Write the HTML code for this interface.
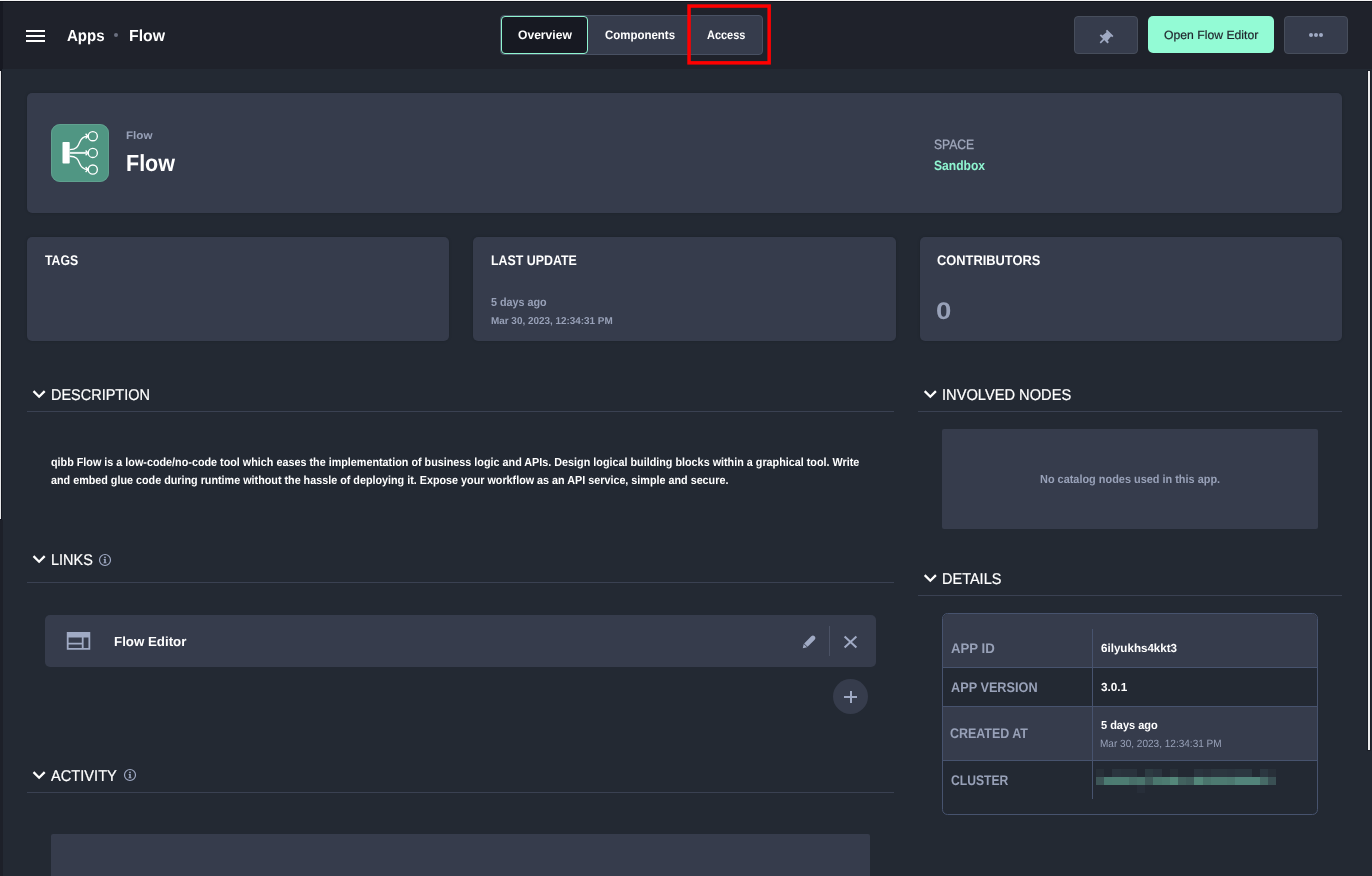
<!DOCTYPE html>
<html lang="en"><head><meta charset="utf-8"><title>Flow - Apps</title>
<style>
html,body{margin:0;padding:0}
body{width:1372px;height:876px;overflow:hidden;background:#232933;position:relative;font-family:"Liberation Sans", sans-serif;}
.a{position:absolute;display:block}
.t{position:absolute;white-space:nowrap;line-height:20px;height:20px;transform-origin:0 0;text-rendering:geometricPrecision;}
.card{position:absolute;background:#363c4c;border-radius:5px;box-shadow:0 0 3px rgba(0,0,0,.18)}
.hr{position:absolute;height:1px;background:#3a4152}
.btn{position:absolute;box-sizing:border-box;background:#363c4c;border:1px solid #474e5c;border-radius:4px}
</style></head><body>
<!-- header -->
<div class="a" style="left:0;top:0;width:1372px;height:69px;background:#1f222b"></div>
<div class="a" style="left:0;top:0;width:1372px;height:1px;background:#f4f4f4"></div>
<div class="a" style="left:0;top:1px;width:1372px;height:1px;background:#10121a"></div>
<div class="a" style="left:0;top:2px;width:3px;height:67px;background:#171922"></div>
<div class="a" style="left:0;top:69px;width:2px;height:451px;background:#141720"></div>
<div class="a" style="left:0;top:71px;width:1px;height:448px;background:#e8e8ea"></div>
<div class="a" style="left:0;top:520px;width:3px;height:356px;background:#1d2029"></div>
<div class="a" style="left:1367px;top:70px;width:4px;height:681px;background:#1b1f28"></div>
<div class="a" style="left:1368px;top:71px;width:2px;height:679px;background:#ececee"></div>
<!-- hamburger -->
<div class="a" style="left:26px;top:30px;width:19px;height:2px;background:#fff"></div>
<div class="a" style="left:26px;top:35px;width:19px;height:2px;background:#fff"></div>
<div class="a" style="left:26px;top:40px;width:19px;height:2px;background:#fff"></div>
<div class="a" style="left:113.7px;top:32.8px;width:4.4px;height:4.4px;border-radius:50%;background:#6b7080"></div>
<!-- tabs -->
<div class="a" style="left:500px;top:15px;width:263px;height:40px;box-sizing:border-box;background:#363c4c;border:1px solid #495163;border-radius:4px"></div>
<div class="a" style="left:501px;top:16px;width:87px;height:38px;box-sizing:border-box;background:#171922;border:1px solid #8ff5d0;border-radius:4px"></div>
<svg class="a" style="left:680px;top:0" width="100" height="70"><rect x="9.05" y="6.05" width="80.1" height="56.8" fill="none" stroke="#ff0000" stroke-width="3.5"/></svg>
<!-- right buttons -->
<div class="btn" style="left:1074px;top:16px;width:64px;height:38px"></div>
<svg class="a" style="left:1094px;top:24px" width="26" height="26" viewBox="-13 -13 26 26"><g transform="translate(-0.9,0.0) rotate(45)" fill="#a0aac4"><rect x="-4.5" y="-5.9" width="9" height="1.9"/><path d="M-3 -4.4 H3 L3.6 2 H-3.6 Z"/><rect x="-5.6" y="1.6" width="11.2" height="1.9"/><rect x="-0.8" y="3" width="1.6" height="5.3"/></g></svg>
<div class="a" style="left:1148px;top:16px;width:126px;height:37px;background:#93fbd5;border-radius:5px"></div>
<div class="btn" style="left:1284px;top:16px;width:64px;height:38px"></div>
<div class="a" style="left:1309px;top:33px;width:4px;height:4px;border-radius:50%;background:#a0aac4"></div>
<div class="a" style="left:1314px;top:33px;width:4px;height:4px;border-radius:50%;background:#a0aac4"></div>
<div class="a" style="left:1319px;top:33px;width:4px;height:4px;border-radius:50%;background:#a0aac4"></div>
<!-- hero card -->
<div class="card" style="left:27px;top:93px;width:1315px;height:120px"></div>
<svg class="a" style="left:51px;top:124px" width="58" height="58" viewBox="0 0 58 58">
<rect x="0" y="0" width="58" height="58" rx="9" fill="#509683"/>
<rect x="0.5" y="0.5" width="57" height="57" rx="8.5" fill="none" stroke="#6aa997" stroke-opacity="0.6"/>
<rect x="11.5" y="18" width="7.2" height="21.6" rx="0.8" fill="#fff"/>
<g fill="none" stroke="#fff" stroke-width="1.35">
<circle cx="41.8" cy="12.2" r="4.55"/><circle cx="41.8" cy="28.9" r="4.55"/><circle cx="41.8" cy="45.5" r="4.55"/>
<path d="M18.7 25.6 C25.5 25.6 27 22.5 28.5 18.5 C30 14.5 32 12.2 36.8 12.2"/>
<path d="M18.7 32.2 C25.5 32.2 27 35.3 28.5 39.3 C30 43.3 32 45.5 36.8 45.5"/>
<path d="M34.6 9.8 L37 12.2 L34.6 14.6 M34.6 26.5 L37 28.9 L34.6 31.3 M34.6 43.1 L37 45.5 L34.6 47.9"/>
</g>
<path d="M18.7 28.9 H36.5" stroke="#e6f1ee" stroke-width="2" fill="none"/>
</svg>
<!-- stat cards -->
<div class="card" style="left:27px;top:237px;width:422px;height:104px"></div>
<div class="card" style="left:473px;top:237px;width:423px;height:104px"></div>
<div class="card" style="left:920px;top:237px;width:422px;height:104px"></div>
<!-- section headers -->
<svg class="a" style="left:0;top:0" width="1372" height="876"><path d="M33.51 391.10 L39.11 396.70 L44.71 391.10" fill="none" stroke="#fff" stroke-width="2.3"/></svg><svg class="a" style="left:0;top:0" width="1372" height="876"><path d="M924.71 391.10 L930.31 396.70 L935.91 391.10" fill="none" stroke="#fff" stroke-width="2.3"/></svg><svg class="a" style="left:0;top:0" width="1372" height="876"><path d="M33.51 556.10 L39.11 561.70 L44.71 556.10" fill="none" stroke="#fff" stroke-width="2.3"/></svg><svg class="a" style="left:0;top:0" width="1372" height="876"><path d="M924.71 575.10 L930.31 580.70 L935.91 575.10" fill="none" stroke="#fff" stroke-width="2.3"/></svg><svg class="a" style="left:0;top:0" width="1372" height="876"><path d="M33.51 772.10 L39.11 777.70 L44.71 772.10" fill="none" stroke="#fff" stroke-width="2.3"/></svg>
<div class="hr" style="left:27px;top:411px;width:867px"></div>
<div class="hr" style="left:918px;top:411px;width:424px"></div>
<div class="hr" style="left:27px;top:582px;width:867px"></div>
<div class="hr" style="left:918px;top:595px;width:424px"></div>
<div class="hr" style="left:27px;top:792px;width:867px"></div>
<svg class="a" style="left:98.1px;top:553px" width="14" height="14" viewBox="-7 -7 14 14"><circle r="5.5" fill="none" stroke="#a0aac4" stroke-width="1.2"/><circle cx="0" cy="-2.6" r="0.9" fill="#a0aac4"/><path d="M-1.3 -1 H0.8 V2.4 H1.6 V3.3 H-1.6 V2.4 H-0.8 V-0.1 H-1.3 Z" fill="#a0aac4"/></svg><svg class="a" style="left:123px;top:768.3px" width="14" height="14" viewBox="-7 -7 14 14"><circle r="5.5" fill="none" stroke="#a0aac4" stroke-width="1.2"/><circle cx="0" cy="-2.6" r="0.9" fill="#a0aac4"/><path d="M-1.3 -1 H0.8 V2.4 H1.6 V3.3 H-1.6 V2.4 H-0.8 V-0.1 H-1.3 Z" fill="#a0aac4"/></svg>
<!-- involved nodes -->
<div class="card" style="left:942px;top:429px;width:376px;height:100px;border-radius:2px;box-shadow:none"></div>
<!-- links -->
<div class="card" style="left:45px;top:615px;width:831px;height:52px;box-shadow:none"></div>
<svg class="a" style="left:66px;top:631px" width="26" height="20" viewBox="0 0 26 20"><path fill-rule="evenodd" fill="#a0aac4" d="M0.8 0.9 H24.25 V18.8 H0.8 Z M2.6 6.4 V11.8 H15.8 V6.4 Z M2.6 13.5 V17 H15.8 V13.5 Z M17.6 6.4 V17 H22.45 V6.4 Z"/></svg>
<svg class="a" style="left:801px;top:634px" width="16" height="16" viewBox="0 0 16 16"><g transform="translate(8,8) rotate(45)" fill="#a0aac4"><path d="M-2.4 -5.6 a2.4 2.4 0 0 1 4.8 0 V4.4 H-2.4 Z"/><path d="M-2.4 5.1 H2.4 L0 8.8 Z"/></g></svg>
<div class="a" style="left:829px;top:626px;width:1px;height:30px;background:#4b5265"></div>
<svg class="a" style="left:843px;top:635px" width="15" height="14" viewBox="0 0 15 14"><path d="M1.6 1.4 L13.4 12.6 M13.4 1.4 L1.6 12.6" stroke="#a0aac4" stroke-width="2" fill="none"/></svg>
<div class="a" style="left:833px;top:679px;width:35px;height:35px;border-radius:50%;background:#363c4c"></div>
<div class="a" style="left:844.3px;top:695.9px;width:12.6px;height:2px;background:#a0aac4"></div>
<div class="a" style="left:849.6px;top:690.6px;width:2px;height:12.6px;background:#a0aac4"></div>
<!-- activity -->
<div class="card" style="left:51px;top:834px;width:819px;height:60px;border-radius:2px 2px 0 0;box-shadow:none"></div>
<!-- details table -->
<div class="a" style="left:942px;top:613px;width:376px;height:202px;box-sizing:border-box;border:1px solid #47536e;border-radius:5.5px;overflow:hidden;background:#232933">
<div class="a" style="left:0;top:0;width:374px;height:53px;background:#363c4c"></div>
<div class="a" style="left:0;top:93px;width:374px;height:53px;background:#363c4c"></div>
<div class="a" style="left:0;top:53px;width:374px;height:1px;background:#47536e"></div>
<div class="a" style="left:0;top:92px;width:374px;height:1px;background:#47536e"></div>
<div class="a" style="left:0;top:146px;width:374px;height:1px;background:#47536e"></div>
<div class="a" style="left:149px;top:15px;width:1px;height:170px;background:#47536e"></div>
</div>
<svg class="a" style="left:1095.8px;top:768.8px" width="181" height="25" shape-rendering="crispEdges"><rect x="0.0" y="8" width="8.25" height="8.2" fill="#3d5557"/><rect x="8.2" y="8" width="8.25" height="8.2" fill="#4c7b72"/><rect x="16.4" y="8" width="8.25" height="8.2" fill="#4d7c72"/><rect x="24.6" y="8" width="8.25" height="8.2" fill="#4d7c72"/><rect x="32.8" y="8" width="8.25" height="8.2" fill="#486f69"/><rect x="41.0" y="8" width="8.25" height="8.2" fill="#4a746c"/><rect x="49.2" y="8" width="8.25" height="8.2" fill="#3f5a5a"/><rect x="57.4" y="8" width="8.25" height="8.2" fill="#4b776e"/><rect x="65.6" y="8" width="8.25" height="8.2" fill="#4d7b71"/><rect x="73.8" y="8" width="8.25" height="8.2" fill="#54877a"/><rect x="82.0" y="8" width="8.25" height="8.2" fill="#42625f"/><rect x="90.2" y="8" width="8.25" height="8.2" fill="#3f5c5b"/><rect x="98.4" y="8" width="8.25" height="8.2" fill="#54877a"/><rect x="106.6" y="8" width="8.25" height="8.2" fill="#4a746c"/><rect x="114.8" y="8" width="8.25" height="8.2" fill="#4d7a71"/><rect x="123.0" y="8" width="8.25" height="8.2" fill="#4d7a71"/><rect x="131.2" y="8" width="8.25" height="8.2" fill="#4c776f"/><rect x="139.4" y="8" width="8.25" height="8.2" fill="#52837a"/><rect x="147.6" y="8" width="8.25" height="8.2" fill="#52837a"/><rect x="155.8" y="8" width="8.25" height="8.2" fill="#52837a"/><rect x="164.0" y="8" width="8.25" height="8.2" fill="#476b67"/><rect x="172.2" y="8" width="8.25" height="8.2" fill="#3a5054"/><rect x="0.0" y="0" width="8.25" height="8" fill="#283039"/><rect x="16.4" y="0" width="8.25" height="8" fill="#2b353f"/><rect x="24.6" y="0" width="8.25" height="8" fill="#2a333d"/><rect x="32.8" y="0" width="8.25" height="8" fill="#2a333d"/><rect x="49.2" y="0" width="8.25" height="8" fill="#2d3b42"/><rect x="57.4" y="0" width="8.25" height="8" fill="#2b353f"/><rect x="73.8" y="0" width="8.25" height="8" fill="#283039"/><rect x="98.4" y="0" width="8.25" height="8" fill="#2b353f"/><rect x="106.6" y="0" width="8.25" height="8" fill="#2a323c"/><rect x="114.8" y="0" width="8.25" height="8" fill="#2c3740"/><rect x="123.0" y="0" width="8.25" height="8" fill="#2c3740"/><rect x="131.2" y="0" width="8.25" height="8" fill="#2b353f"/><rect x="139.4" y="0" width="8.25" height="8" fill="#2c3841"/><rect x="147.6" y="0" width="8.25" height="8" fill="#2c3841"/><rect x="164.0" y="0" width="8.25" height="8" fill="#2c3841"/><rect x="172.2" y="0" width="8.25" height="8" fill="#283039"/><rect x="41.0" y="16.2" width="8.2" height="8" fill="#272e39"/></svg>
<div class="a" style="left:0;top:0;width:1372px;height:876px;will-change:transform"><span class="t" id="t-apps" style="left:67.31px;top:27.00px;font-size:16px;font-weight:700;color:#fff;transform:scaleX(0.9399);">Apps</span><span class="t" id="t-bflow" style="left:129.15px;top:27.00px;font-size:16px;font-weight:700;color:#fff;transform:scaleX(0.9881);">Flow</span><span class="t" id="t-ov" style="left:517.82px;top:25.00px;font-size:12.25px;font-weight:700;color:#fff;transform:scaleX(0.9878);">Overview</span><span class="t" id="t-comp" style="left:604.54px;top:25.00px;font-size:12.25px;font-weight:700;color:#fff;transform:scaleX(0.9360);">Components</span><span class="t" id="t-acc" style="left:707.01px;top:25.00px;font-size:12.25px;font-weight:700;color:#fff;transform:scaleX(0.8952);">Access</span><span class="t" id="t-open" style="left:1163.68px;top:25.00px;font-size:12px;font-weight:400;color:#1f222b;transform:scaleX(1.0166);-webkit-text-stroke:0.2px #1f222b;">Open Flow Editor</span><span class="t" id="t-sflow" style="left:125.59px;top:126.00px;font-size:11px;font-weight:700;color:#98a1b8;transform:scaleX(1.0578);">Flow</span><span class="t" id="t-hflow" style="left:125.92px;top:153.00px;font-size:23.3px;font-weight:700;color:#fff;transform:scaleX(0.9229);">Flow</span><span class="t" id="t-space" style="left:933.71px;top:135.00px;font-size:13.5px;font-weight:400;color:#a0a8bc;transform:scaleX(0.8969);-webkit-text-stroke:0.3px #a0a8bc;">SPACE</span><span class="t" id="t-sand" style="left:933.80px;top:156.00px;font-size:13.5px;font-weight:700;color:#8ff5d0;transform:scaleX(0.8956);">Sandbox</span><span class="t" id="t-tags" style="left:44.99px;top:250.00px;font-size:14px;font-weight:700;color:#fff;transform:scaleX(0.8773);">TAGS</span><span class="t" id="t-lu" style="left:490.81px;top:250.00px;font-size:14px;font-weight:700;color:#fff;transform:scaleX(0.8851);">LAST UPDATE</span><span class="t" id="t-contrib" style="left:936.78px;top:250.00px;font-size:14px;font-weight:700;color:#fff;transform:scaleX(0.9174);">CONTRIBUTORS</span><span class="t" id="t-ago1" style="left:491.18px;top:293.00px;font-size:11.67px;font-weight:700;color:#98a1b8;transform:scaleX(0.9239);">5 days ago</span><span class="t" id="t-date1" style="left:491.00px;top:312.00px;font-size:10px;font-weight:700;color:#98a1b8;transform:scaleX(0.9909);">Mar 30, 2023, 12:34:31 PM</span><span class="t" id="t-zero" style="left:936.15px;top:302.00px;font-size:24px;font-weight:700;color:#98a1b8;transform:scaleX(1.1503);">0</span><span class="t" id="t-desc" style="left:50.71px;top:386.00px;font-size:15.5px;font-weight:400;color:#fff;transform:scaleX(0.9341);-webkit-text-stroke:0.2px #fff;">DESCRIPTION</span><span class="t" id="t-inv" style="left:941.88px;top:386.00px;font-size:15.5px;font-weight:400;color:#fff;transform:scaleX(0.9458);-webkit-text-stroke:0.2px #fff;">INVOLVED NODES</span><span class="t" id="t-links" style="left:50.71px;top:551.00px;font-size:15.5px;font-weight:400;color:#fff;transform:scaleX(0.9328);-webkit-text-stroke:0.2px #fff;">LINKS</span><span class="t" id="t-det" style="left:942.01px;top:570.00px;font-size:15.5px;font-weight:400;color:#fff;transform:scaleX(0.9360);-webkit-text-stroke:0.2px #fff;">DETAILS</span><span class="t" id="t-act" style="left:50.87px;top:767.00px;font-size:15.5px;font-weight:400;color:#fff;transform:scaleX(0.9442);-webkit-text-stroke:0.2px #fff;">ACTIVITY</span><span class="t" id="t-d1" style="left:50.56px;top:453.00px;font-size:11.67px;font-weight:700;color:#fff;transform:scaleX(0.9259);">qibb Flow is a low-code/no-code tool which eases the implementation of business logic and APIs. Design logical building blocks within a graphical tool. Write</span><span class="t" id="t-d2" style="left:50.68px;top:471.00px;font-size:11.67px;font-weight:700;color:#fff;transform:scaleX(0.9244);">and embed glue code during runtime without the hassle of deploying it. Expose your workflow as an API service, simple and secure.</span><span class="t" id="t-nocat" style="left:1040.22px;top:470.00px;font-size:11.67px;font-weight:700;color:#98a1b8;transform:scaleX(0.9362);">No catalog nodes used in this app.</span><span class="t" id="t-fe" style="left:114.25px;top:632.00px;font-size:13.25px;font-weight:700;color:#fff;transform:scaleX(1.0039);">Flow Editor</span><span class="t" id="t-appid" style="left:950.66px;top:638.00px;font-size:14px;font-weight:700;color:#98a1b8;transform:scaleX(0.9430);">APP ID</span><span class="t" id="t-appver" style="left:950.67px;top:677.00px;font-size:14px;font-weight:700;color:#98a1b8;transform:scaleX(0.9073);">APP VERSION</span><span class="t" id="t-created" style="left:950.49px;top:723.00px;font-size:14px;font-weight:700;color:#98a1b8;transform:scaleX(0.8895);">CREATED AT</span><span class="t" id="t-cluster" style="left:950.51px;top:770.00px;font-size:14px;font-weight:700;color:#98a1b8;transform:scaleX(0.8663);">CLUSTER</span><span class="t" id="t-idv" style="left:1100.80px;top:639.00px;font-size:11.67px;font-weight:700;color:#fff;transform:scaleX(0.9949);">6ilyukhs4kkt3</span><span class="t" id="t-ver" style="left:1100.76px;top:678.00px;font-size:11.67px;font-weight:700;color:#fff;transform:scaleX(1.0094);">3.0.1</span><span class="t" id="t-ago2" style="left:1100.77px;top:716.00px;font-size:11.67px;font-weight:700;color:#fff;transform:scaleX(0.9424);">5 days ago</span><span class="t" id="t-date2" style="left:1100.43px;top:734.00px;font-size:10.5px;font-weight:400;color:#98a1b8;transform:scaleX(0.9559);">Mar 30, 2023, 12:34:31 PM</span></div>
</body></html>
